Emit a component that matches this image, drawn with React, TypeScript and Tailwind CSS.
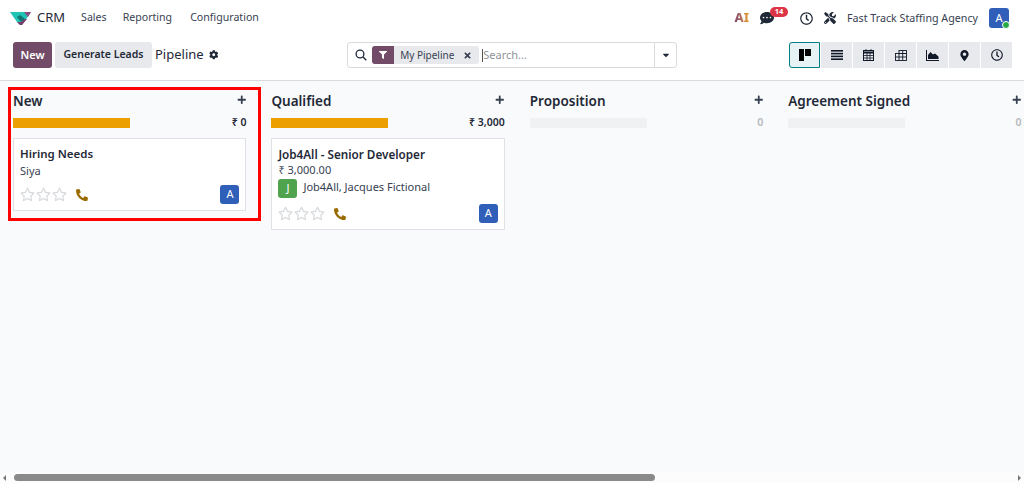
import React from 'react';
import { FaCog, FaPhone, FaRegStar, FaPlus, FaCaretDown, FaMapMarkerAlt, FaRegClock, FaFilter, FaTimes, FaCommentDots, FaTools } from 'react-icons/fa';

const Avatar = ({ letter, color = 'bg-[#2f5fb8]', size = 'w-[19px] h-[19px]' }: { letter: string; color?: string; size?: string }) => (
  <div className={`${size} ${color} rounded-[3px] flex items-center justify-center text-white text-[11px] shrink-0`}>{letter}</div>
);

const Stars = () => (
  <div className="flex items-center gap-[1px] text-[#d8dadd] text-[15px]">
    <FaRegStar />
    <FaRegStar />
    <FaRegStar />
  </div>
);

const Logo = () => (
  <svg width="21" height="13" viewBox="0 0 21 13">
    <path d="M0 0 H21 L12 13 H10 L7 10 Z" fill="#1fc4b4" />
    <path d="M7 5 L10 3 L15 7 L11 10 Z" fill="#14756f" />
    <path d="M14 0 H21 L18 5 Z" fill="#8e4a7d" />
    <path d="M7 10 L11 10 L15 7 L17 7 L12 13 H10 Z" fill="#7c3d6e" />
  </svg>
);

const ViewIcon = ({ children, active }: { children: React.ReactNode; active?: boolean }) => (
  <div className={`w-[31px] h-[26px] flex items-center justify-center text-[#111827] text-[12px] ${active ? 'bg-[#e6f2f3] border border-[#017e84] rounded-l-[3px]' : 'bg-[#e7e9ed]'}`}>
    {children}
  </div>
);

const Column = ({ title, total, filled, children }: { title: string; total: string; filled?: boolean; children?: React.ReactNode }) => (
  <div className="w-[233.4px] shrink-0">
    <div className="flex items-center justify-between h-[22px]">
      <span className="text-[13.5px] font-semibold text-[#1f2937] whitespace-nowrap">{title}</span>
      <FaPlus className="text-[#374151] text-[9.5px] mb-[2px]" />
    </div>
    <div className="flex items-center justify-between h-[12px] mt-[5px]">
      <div className={`w-[117px] h-[10px] ${filled ? 'bg-[#eb9f00]' : 'bg-[#f0f1f3]'}`} />
      <span className={`text-[10.5px] font-semibold ${filled ? 'text-[#1f2937]' : 'text-[#b5b8bd]'}`}>{total}</span>
    </div>
    {children}
  </div>
);

const Card = ({ children, height }: { children: React.ReactNode; height: string }) => (
  <div className={`mt-[9px] bg-white border border-[#dfe1e6] px-[6px] pt-[7px] relative ${height}`}>{children}</div>
);

const CardFooter = () => (
  <div className="absolute left-[6px] right-[6px] bottom-[6px] flex items-center justify-between">
    <div className="flex items-center gap-[9px]">
      <Stars />
      <FaPhone className="text-[#9a6b01] text-[12px] -scale-x-100" />
    </div>
    <Avatar letter="A" />
  </div>
);

export default function App() {
  return (
    <div className="w-[1024px] h-[483px] flex flex-col overflow-hidden bg-[#f9fafb] font-['Noto_Sans',sans-serif] text-[#374151]">
      <nav className="h-[33px] bg-white flex items-center justify-between shrink-0 pl-[10px] pr-[15px] pt-[3px]">
        <div className="flex items-center text-[10.6px]">
          <Logo />
          <span className="ml-[6px] text-[13px] text-[#1f2937]">CRM</span>
          <span className="ml-[16px]">Sales</span>
          <span className="ml-[16px]">Reporting</span>
          <span className="ml-[18px]">Configuration</span>
        </div>
        <div className="flex items-center text-[#1f2937]">
          <span className="text-[13px] font-extrabold bg-gradient-to-r from-[#7c3d6e] to-[#eb9f00] bg-clip-text text-transparent">AI</span>
          <div className="ml-[11px] relative w-[16px] h-[16px] flex items-center">
            <FaCommentDots className="text-[14px]" />
            <span className="absolute -top-[3px] left-[10px] bg-[#dc3545] text-white text-[7.5px] font-bold rounded-full w-[18px] h-[10px] flex items-center justify-center">14</span>
          </div>
          <FaRegClock className="ml-[24px] text-[13px]" />
          <FaTools className="ml-[11px] text-[12px]" />
          <span className="ml-[11px] text-[10.7px] text-[#374151] whitespace-nowrap">Fast Track Staffing Agency</span>
          <div className="ml-[11px] relative">
            <Avatar letter="A" size="w-[20px] h-[20px]" />
            <span className="absolute -right-[1px] -bottom-[1px] w-[8px] h-[8px] rounded-full bg-[#28a745] border border-white" />
          </div>
        </div>
      </nav>

      <div className="h-[48px] bg-white border-b border-[#d8dadd] shrink-0 flex items-center pl-[13px] pr-[12px] pb-[3px] relative">
        <div className="w-[39px] h-[26px] bg-[#714b67] rounded-[3px] text-white text-[11px] font-semibold flex items-center justify-center">New</div>
        <div className="ml-[3px] w-[97px] h-[26px] bg-[#e7e9ed] rounded-[3px] text-[#1f2937] text-[10.5px] font-semibold flex items-center justify-center whitespace-nowrap">Generate Leads</div>
        <span className="ml-[3px] text-[13px] text-[#1f2937]">Pipeline</span>
        <FaCog className="ml-[5px] text-[9.5px] text-[#1f2937]" />

        <div className="ml-[129px] w-[330px] h-[26px] bg-white border border-[#d8dadd] rounded-[3px] flex items-center">
          <svg width="12" height="12" viewBox="0 0 12 12" className="ml-[7px] shrink-0" fill="none" stroke="#1f2937" strokeWidth="1.3">
            <circle cx="5" cy="5" r="3.9" />
            <path d="M8 8 L11.3 11.3" />
          </svg>
          <div className="ml-[5px] h-[18px] flex items-center bg-[#e7e9ed] rounded-[3px] overflow-hidden">
            <div className="w-[22px] h-full bg-[#714b67] flex items-center justify-center text-white text-[8px]"><FaFilter /></div>
            <span className="ml-[6px] text-[10px] text-[#374151] whitespace-nowrap">My Pipeline</span>
            <FaTimes className="ml-[9px] mr-[7px] text-[9px] text-[#374151]" />
          </div>
          <div className="ml-[3px] w-px h-[13px] bg-[#555]" />
          <span className="text-[11px] text-[#8f939a] flex-1">Search...</span>
          <div className="w-[22px] h-full border-l border-[#d8dadd] flex items-center justify-center text-[#1f2937] text-[10px]"><FaCaretDown /></div>
        </div>

        <div className="ml-auto flex items-center gap-px">
          <ViewIcon active>
            <svg width="12" height="12" viewBox="0 0 12 12" fill="#000">
              <rect x="0" y="0" width="5" height="12" />
              <rect x="6" y="0" width="6" height="7" />
            </svg>
          </ViewIcon>
          <ViewIcon>
            <svg width="12" height="10" viewBox="0 0 12 10" fill="#111827">
              <rect y="0" width="12" height="1.6" />
              <rect y="2.8" width="12" height="1.6" />
              <rect y="5.6" width="12" height="1.6" />
              <rect y="8.4" width="12" height="1.6" />
            </svg>
          </ViewIcon>
          <ViewIcon>
            <svg width="11" height="12" viewBox="0 0 11 12" fill="none" stroke="#111827">
              <rect x="0.5" y="1.5" width="10" height="10" />
              <path d="M0.5 3.5 H10.5" strokeWidth="2" />
              <path d="M3 0 V2 M8 0 V2 M0.5 6.5 H10.5 M0.5 9 H10.5 M4 4 V11.5 M7 4 V11.5" strokeWidth="0.8" />
            </svg>
          </ViewIcon>
          <ViewIcon>
            <svg width="12" height="11" viewBox="0 0 12 11" fill="none" stroke="#111827" strokeWidth="0.9">
              <rect x="0.5" y="3.5" width="11" height="7" />
              <rect x="4" y="0.5" width="7.5" height="3" />
              <path d="M0.5 7 H11.5 M4 3.5 V10.5 M7.7 0.5 V10.5" />
            </svg>
          </ViewIcon>
          <ViewIcon>
            <svg width="13" height="11" viewBox="0 0 13 11" fill="#111827">
              <path d="M0 0 H1 V10 H13 V11 H0 Z" />
              <path d="M2 9 V5 L4.5 2 L7 4.5 L9 3.5 L12.5 6.5 V9 Z" />
            </svg>
          </ViewIcon>
          <ViewIcon><FaMapMarkerAlt className="text-[11px]" /></ViewIcon>
          <ViewIcon><FaRegClock /></ViewIcon>
        </div>
      </div>

      <div className="flex-1 flex gap-[25px] pl-[13px] pt-[9px] overflow-hidden relative">
        <Column title="New" total="₹ 0" filled>
          <Card height="h-[73px]">
            <div className="text-[11.5px] leading-[16px] font-semibold text-[#1f2937]">Hiring Needs</div>
            <div className="text-[11px] leading-[16px] mt-[1px]">Siya</div>
            <CardFooter />
          </Card>
        </Column>
        <Column title="Qualified" total="₹ 3,000" filled>
          <Card height="h-[92px]">
            <div className="text-[11.7px] leading-[16px] font-semibold text-[#1f2937] whitespace-nowrap">Job4All - Senior Developer</div>
            <div className="text-[11px] leading-[16px]">₹ 3,000.00</div>
            <div className="flex items-center gap-[6px] text-[11px] mt-[1px]">
              <Avatar letter="J" color="bg-[#4fa34f]" />
              <span className="whitespace-nowrap leading-[16px] mb-[3px]">Job4All, Jacques Fictional</span>
            </div>
            <CardFooter />
          </Card>
        </Column>
        <Column title="Proposition" total="0" />
        <Column title="Agreement Signed" total="0" />
        <div className="absolute left-[8px] top-[6px] w-[253px] h-[134px] border-[3px] border-[#f00]" />
      </div>

      <div className="h-[11px] bg-[#fcfcfc] shrink-0 flex items-center relative px-[3px] justify-between">
        <div className="w-0 h-0 border-y-[3px] border-y-transparent border-r-[3px] border-r-[#777]" />
        <div className="w-0 h-0 border-y-[3px] border-y-transparent border-l-[3px] border-l-[#777]" />
        <div className="absolute left-[14px] w-[641px] h-[7px] bg-[#8a8a8a] rounded-full" />
      </div>
    </div>
  );
}
